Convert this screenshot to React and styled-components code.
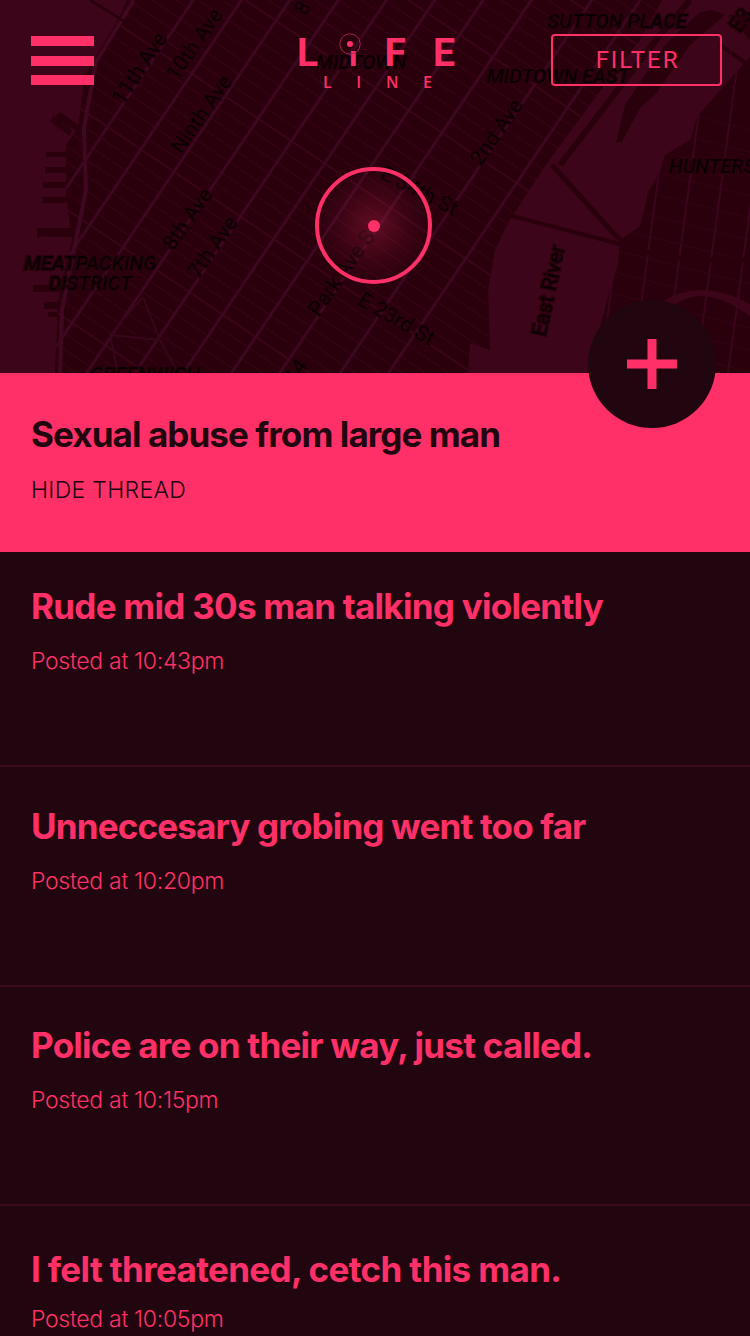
import React from "react";
import styled, { createGlobalStyle } from "styled-components";

const PINK = "#ff3068";
const INK = "#22060f";

const Global = createGlobalStyle`
  html, body { margin: 0; padding: 0; background: ${INK}; }
  * { box-sizing: border-box; }
`;

const Page = styled.div`
  width: 750px;
  height: 1336px;
  overflow: hidden;
  background: ${INK};
  font-family: Inter, "Liberation Sans", sans-serif;
`;

const MapPanel = styled.section`
  position: relative;
  height: 373px;
  background: #2a000c;
`;

const MapArt = styled.svg`
  position: absolute;
  inset: 0;
  display: block;
`;

const Header = styled.header`
  position: relative;
  display: flex;
  align-items: flex-start;
  padding: 34px 0 0 31px;
`;

const Burger = styled.div`
  width: 63px;
  margin-top: 2px;
  display: flex;
  flex-direction: column;
  gap: 9.5px;
`;

const BurgerBar = styled.span`
  display: block;
  height: 10px;
  background: ${PINK};
`;

const Logo = styled.div`
  position: relative;
  width: 158px;
  margin-left: 203px;
  margin-top: -2px;
  color: ${PINK};
  font-family: Roboto, sans-serif;
`;

const LogoTop = styled.div`
  display: flex;
  justify-content: space-between;
  align-items: baseline;
  height: 42px;
  font-size: 39px;
  font-weight: 700;
  line-height: 42px;
`;

const LogoStem = styled.span`
  font-size: 28px;
  font-weight: 900;
  margin-left: 4px;
`;

const LogoPin = styled.svg`
  position: absolute;
  left: 41px;
  top: 0;
`;

const LogoBottom = styled.div`
  display: flex;
  justify-content: space-between;
  padding: 0 23px 0 26px;
  margin-top: -1px;
  font-family: "Open Sans", sans-serif;
  font-size: 16px;
  font-weight: 600;
  line-height: 18px;
`;

const FilterButton = styled.button`
  width: 171px;
  height: 52px;
  margin-left: 96px;
  padding: 0 0 0 2px;
  background: transparent;
  border: 2px solid ${PINK};
  border-radius: 4px;
  color: ${PINK};
  font-family: Roboto, sans-serif;
  font-size: 24px;
  font-weight: 400;
  letter-spacing: 1.9px;
`;

const Pulse = styled.div`
  position: absolute;
  left: 315px;
  top: 167px;
  width: 117px;
  height: 117px;
  border: 4.5px solid ${PINK};
  border-radius: 50%;
  background: radial-gradient(circle, rgba(255, 48, 104, 0.25) 0%, rgba(255, 48, 104, 0.08) 45%, rgba(255, 48, 104, 0) 78%);
  display: flex;
  align-items: center;
  justify-content: center;
`;

const PulseDot = styled.span`
  width: 12px;
  height: 12px;
  border-radius: 50%;
  background: ${PINK};
`;

const AddButton = styled.button`
  position: absolute;
  left: 588px;
  top: 300px;
  width: 128px;
  height: 128px;
  padding: 0;
  border: 0;
  border-radius: 50%;
  background: ${INK};
  z-index: 2;
  display: flex;
  align-items: center;
  justify-content: center;
`;

const ActiveThread = styled.article`
  height: 179px;
  padding: 39px 31px 0;
  background: ${PINK};
  color: ${INK};
`;

const Thread = styled.article`
  height: ${(p) => p.$height}px;
  padding: ${(p) => p.$pad}px 31px 0;
  border-top: ${(p) => (p.$first ? "0" : "2px solid #3c0a1e")};
  color: ${PINK};
`;

const Title = styled.h2`
  margin: 0;
  font-size: 35px;
  font-weight: 650;
  line-height: 44px;
  letter-spacing: ${(p) => p.$track}px;
  white-space: nowrap;
`;

const Meta = styled.p`
  margin: ${(p) => p.$gap}px 0 0;
  font-size: 23px;
  font-weight: 300;
  line-height: 30px;
  letter-spacing: ${(p) => p.$track}px;
  white-space: nowrap;
`;

const threads = [
  { title: "Rude mid 30s man talking violently", track: -0.73, time: "Posted at 10:43pm", height: 213, pad: 32, gap: 18, first: true },
  { title: "Unneccesary grobing went too far", track: -0.84, time: "Posted at 10:20pm", height: 220, pad: 37, gap: 18 },
  { title: "Police are on their way, just called.", track: -0.76, time: "Posted at 10:15pm", height: 219, pad: 36, gap: 18 },
  { title: "I felt threatened, cetch this man.", track: -0.64, time: "Posted at 10:05pm", height: 132, pad: 41, gap: 13 },
];

const ax = 0.56, ay = -0.83, sx = 0.83, sy = 0.56;
const pt = (u, v) => `${(u * sx + v * ax).toFixed(1)} ${(u * sy + v * ay).toFixed(1)}`;
const avenueU = [160, 200, 240, 280, 320, 360, 400, 440, 490, 530];
const avenues = avenueU.map((u) => `M${pt(u, -500)}L${pt(u, 700)}`).join("");
const streetV = Array.from({ length: 110 }, (_, i) => -500 + i * 13);
const streets = streetV.map((v) => `M${pt(-300, v)}L${pt(1000, v)}`).join("");
const wide = streetV.filter((_, i) => i % 7 === 0).map((v) => `M${pt(-300, v)}L${pt(1000, v)}`).join("");
const qVert = Array.from({ length: 8 }, (_, i) => `M${600 + i * 32} 373L${650 + i * 32} 0`).join("");
const qCross = Array.from({ length: 14 }, (_, i) => `M590 ${90 + i * 22}L750 ${130 + i * 22}`).join("");

const manhattan = "M127 0L118 20L100 50L85 75L78 128L66 145L66 195L72 240L58 300L55 373L468 373L470 343L490 350L488 290L495 250L508 223L547 163L603 87L640 40L662 0Z";
const queens = "M750 57L723 87L697 117L690 140L665 155L660 172L648 192L645 208L640 226L620 240L618 265L610 290L604 312L588 373L750 373Z";
const island = "M616 143L622 142L640 108L655 95L690 45L725 15L712 10L700 12L665 45L645 75L625 105Z";

const Label = styled.text`
  font-family: Roboto, "Liberation Sans", sans-serif;
  font-size: ${(p) => p.$size || 21}px;
  font-style: ${(p) => (p.$area ? "italic" : "normal")};
  font-weight: ${(p) => (p.$area ? 500 : 400)};
  fill: #0a0004;
  stroke: #2a000c;
  stroke-width: 2.5px;
  paint-order: stroke;
  text-anchor: middle;
`;

const roads = [
  ["11th Ave", 145, 72, -56], ["10th Ave", 200, 48, -55], ["Ninth Ave", 207, 118, -55],
  ["8th Ave", 193, 223, -55], ["7th Ave", 218, 251, -55], ["2nd Ave", 502, 136, -55],
  ["Park Ave S", 347, 277, -55], ["E 34th St", 416, 197, 27], ["E 23rd St", 393, 325, 30],
  ["8", 308, 12, -55], ["E 14", 296, 382, -55], ["E3", 746, 24, -55],
];
const areas = [
  ["SUTTON PLACE", 617, 28], ["MIDTOWN EAST", 558, 83], ["MIDTOWN", 361, 69],
  ["HUNTERS", 712, 173], ["MEATPACKING", 90, 270], ["DISTRICT", 90, 290], ["GREENWICH", 145, 381],
];

function CityMap() {
  return (
    <MapArt width="750" height="373" viewBox="0 0 750 373" aria-hidden="true">
      <defs>
        <clipPath id="mh"><path d={manhattan} /></clipPath>
        <clipPath id="qn"><path d={queens} /></clipPath>
      </defs>
      <rect width="750" height="373" fill="#3d0519" />
      <path d={manhattan} fill="#2a000c" />
      <path d={queens} fill="#2a000c" />
      <path d={island} fill="#2a000c" />
      <path d="M728 15L750 14L750 40Z" fill="#2a000c" />
      <g fill="#2a000c">
        <rect x="46" y="152" width="28" height="5" />
        <rect x="45" y="167" width="28" height="6" />
        <rect x="43" y="182" width="28" height="6" />
        <rect x="42" y="197" width="28" height="6" />
        <rect x="37" y="228" width="36" height="9" />
        <rect x="33" y="285" width="30" height="7" />
        <rect x="44" y="302" width="16" height="7" />
        <rect x="48" y="312" width="10" height="5" />
        <path d="M60 112L80 126L78 132L54 118Z" />
        <path d="M53 116L72 130L70 136L50 122Z" />
      </g>
      <g clipPath="url(#mh)" fill="none">
        <path d={streets} stroke="#360415" strokeWidth="1.2" />
        <path d={wide} stroke="#3a0519" strokeWidth="2" />
        <path d={avenues} stroke="#3d0720" strokeWidth="3" />
        <path d="M143 297L110 335L118 373M143 297L160 340L178 373M110 335L160 340" stroke="#38051b" strokeWidth="2" />
        <path d="M134 0L96 62L84 128L86 190L74 250L62 310L60 373" stroke="#3f0820" strokeWidth="4" />
      </g>
      <g clipPath="url(#qn)" fill="none">
        <path d={qCross} stroke="#360415" strokeWidth="1.2" />
        <path d={qVert} stroke="#3b061d" strokeWidth="2" />
      </g>
      <path d="M625 373C640 320 680 296 700 296C720 296 735 306 750 316L750 304C735 296 718 290 700 290C670 290 630 315 615 373Z" fill="#3d0519" />
      <g fill="none" stroke="#2a000c" strokeWidth="5">
        <path d="M552 165L615 235C640 258 690 262 750 260" />
        <path d="M512 216L620 244" strokeWidth="4" />
        <path d="M560 165L660 35L690 0" strokeWidth="6" />
        <path d="M720 45L750 66" strokeWidth="4" />
        <path d="M90 0L135 28" strokeWidth="3" />
      </g>
      {roads.map(([t, x, y, a]) => (
        <Label key={t} x={x} y={y} transform={`rotate(${a} ${x} ${y})`}>{t}</Label>
      ))}
      <Label x="555" y="292" transform="rotate(-78 555 292)">East River</Label>
      {areas.map(([t, x, y]) => (
        <Label key={t} x={x} y={y} $area $size={20}>{t}</Label>
      ))}
    </MapArt>
  );
}

export default function App() {
  return (
    <Page>
      <Global />
      <MapPanel>
        <CityMap />
        <Header>
          <Burger>
            <BurgerBar />
            <BurgerBar />
            <BurgerBar />
          </Burger>
          <Logo>
            <LogoTop>
              <span>L</span>
              <LogoStem>ı</LogoStem>
              <span>F</span>
              <span>E</span>
            </LogoTop>
            <LogoPin width="24" height="24" viewBox="0 0 24 24">
              <circle cx="12" cy="12" r="10.2" fill="none" stroke="#a02450" strokeWidth="1" />
              <circle cx="12" cy="12" r="3" fill={PINK} />
            </LogoPin>
            <LogoBottom>
              <span>L</span>
              <span>I</span>
              <span>N</span>
              <span>E</span>
            </LogoBottom>
          </Logo>
          <FilterButton>FILTER</FilterButton>
        </Header>
        <Pulse>
          <PulseDot />
        </Pulse>
        <AddButton aria-label="Add">
          <svg width="50" height="50" viewBox="0 0 50 50">
            <path d="M20.5 0h9v20.5H50v9H29.5V50h-9V29.5H0v-9h20.5z" fill={PINK} />
          </svg>
        </AddButton>
      </MapPanel>
      <ActiveThread>
        <Title $track={-0.91}>Sexual abuse from large man</Title>
        <Meta $gap={19} $track={0.3}>HIDE THREAD</Meta>
      </ActiveThread>
      {threads.map((t) => (
        <Thread key={t.title} $height={t.height} $pad={t.pad} $first={t.first}>
          <Title $track={t.track}>{t.title}</Title>
          <Meta $gap={t.gap} $track={-0.3}>{t.time}</Meta>
        </Thread>
      ))}
    </Page>
  );
}
